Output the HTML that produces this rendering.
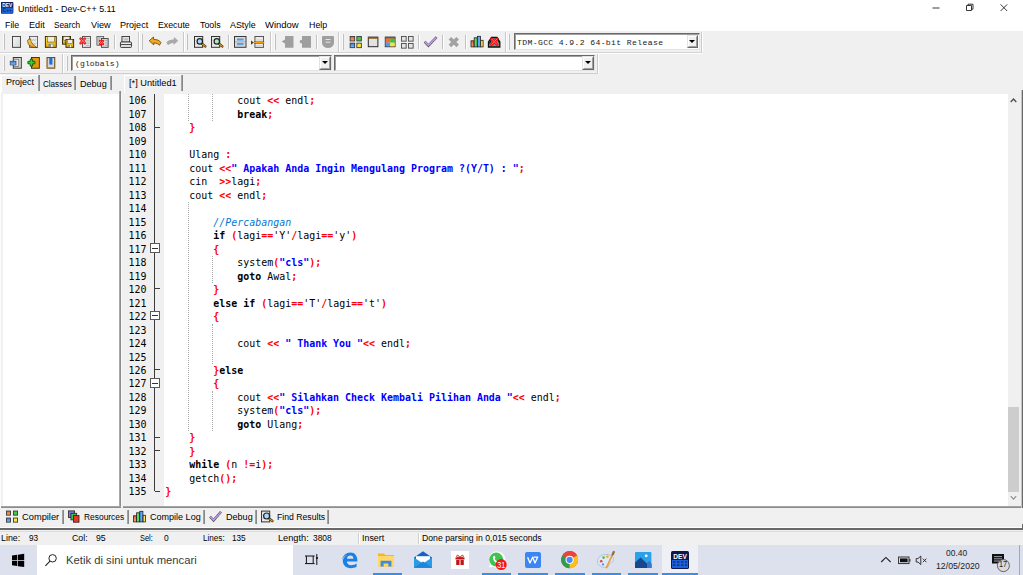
<!DOCTYPE html>
<html lang="id">
<head>
<meta charset="utf-8">
<title>Untitled1 - Dev-C++ 5.11</title>
<style>
html,body{margin:0;padding:0}
body{width:1023px;height:575px;overflow:hidden;position:relative;background:#f0f0f0;font-family:'Liberation Sans',sans-serif}
div,span,i,svg{position:absolute;box-sizing:border-box}
.tx{white-space:pre;display:block}
#top{left:0;top:0;width:1023px;height:31px;background:#fff}
/* toolbar grips & separators */
.grip{width:2px;border-left:1px solid #f8f8f8;border-right:1px solid #c0c0c0}
.bend{width:2px;border-left:1px solid #cacaca;border-right:1px solid #fff}
.sep{width:2px;border-left:1px solid #c2c2c2;border-right:1px solid #fff}
.hl{height:1px;left:0;width:1023px}
/* combos */
.combo{background:#fff;border:1px solid #e3e3e3;border-top-color:#696969;border-left-color:#696969}
.combo:before{content:"";position:absolute;left:0;top:0;right:0;bottom:0;border-left:1px solid #a0a0a0;border-top:1px solid #a0a0a0}
.dd{background:#f0f0f0;border:1px solid #696969;border-top-color:#e3e3e3;border-left-color:#e3e3e3}
.dd:before{content:"";position:absolute;left:0;top:0;right:0;bottom:0;border:1px solid #a0a0a0;border-top-color:#fff;border-left-color:#fff}
.dd:after{content:"";position:absolute;left:50%;top:50%;margin:-1.5px 0 0 -3px;border:3px solid transparent;border-top:3.2px solid #000;border-bottom:0}
/* tabs */
.tab{background:#f0f0f0}
.vsep{width:2px;background:linear-gradient(90deg,#a2a2a2 0 50%,#888 50% 100%)}
.tab.act{border-left:1px solid #fff;border-top:1px solid #fff}
/* panels */
#leftpane{left:3px;top:94px;width:116px;height:412px;background:#fff}
#editor{left:123px;top:506px;width:900px;height:2px;background:linear-gradient(#a4a4a4 0 50%,#8c8c8c 50% 100%)}
#codebg{left:164px;top:94px;width:844px;height:412px;background:#fff}
#vscroll{left:1008px;top:94px;width:13px;height:412px;background:#f0f0f0}
#thumb{left:1008px;top:407px;width:11px;height:84.500px;background:#cdcdcd}
.ln{left:121px;width:25.4px;height:13.48px;text-align:right;font:9.95px/13.48px 'DejaVu Sans Mono', 'Liberation Mono', monospace;letter-spacing:0.0080px;color:#000}
.ln .no{position:static}
.cl{left:165.35px;height:13.48px;white-space:pre;font:9.95px/13.48px 'DejaVu Sans Mono', 'Liberation Mono', monospace;letter-spacing:0.0080px;color:#000}
.cl span{position:static}
.s{color:#f00;font-weight:bold}
.k{font-weight:bold}
.q{color:#00f;font-weight:bold}
.c{color:#0078d7;font-style:italic}
.gd{width:0;border-left:1px dotted #aaa}
.fv{width:1px;background:#3c3c3c}
.fh{width:5px;height:1px;background:#3c3c3c}
.fb{width:10px;height:9.5px;background:#fff;border:1px solid #5a5a5a}
.fb i{left:1.2px;right:1.2px;top:3.4px;height:1px;background:#333}
/* bottom */
#btabs{left:0;top:507.4px;width:1023px;height:21px}
.bsep{width:2px;background:linear-gradient(90deg,#a2a2a2 0 50%,#888 50% 100%);top:510px;height:14px}
#status{left:0;top:530px;width:1023px;height:15px;background:#f0f0f0}
.ssep{width:2px;border-left:1px solid #d0d0d0;border-right:1px solid #fff;top:533px;height:11px}
/* taskbar */
#taskbar{left:0;top:544.7px;width:1023px;height:30.3px;background:#dde1ee}
#search{left:36.9px;top:0;width:256.3px;height:30.3px;background:#fff}
.ul{height:1.6px;bottom:0;background:#3a8fe4}
#tbact{left:661.5px;top:0;width:36px;height:30.3px;background:#eef0f6}

#lpr{left:119px;top:91px;width:2px;height:417px;background:linear-gradient(90deg,#a8a8a8 0 50%,#8c8c8c 50% 100%)}
#lpb{left:1px;top:506px;width:120px;height:2px;background:linear-gradient(#a4a4a4 0 50%,#8c8c8c 50% 100%)}
#edr{left:1021px;top:90px;width:2px;height:418px;background:linear-gradient(90deg,#c4c4c4 0 50%,#6a6a6a 50% 100%)}
#lphl{left:121px;top:94px;width:1px;height:412px;background:#f8f8f8}
#lpl{left:0;top:74px;width:1px;height:434px;background:#fcfcfc}

</style>
</head>
<body>
<div id="top"></div>
<!-- title icon -->
<svg style="left:1px;top:2px" width="12" height="12" viewBox="0 0 12 12"><rect x="0" y="0" width="12" height="11.5" fill="#1c3f94"/><rect x="0" y="0" width="12" height="6" fill="#16245c"/><rect x="1.5" y="1.8" width="9" height="3" fill="#dfe6f5"/><rect x="1" y="7" width="10" height="3.6" fill="#2a7de1"/></svg>
<!-- window controls -->
<svg style="left:930px;top:0" width="93" height="17" viewBox="0 0 93 17"><g stroke="#222" stroke-width="0.9" fill="none"><path d="M2.5 8h7"/><path d="M36.5 5.5h5v5h-5zM38 5.5v-1.3h5v5h-1.5"/><path d="M70.6 4.4l6.6 6.6M77.2 4.4l-6.6 6.6"/></g></svg>

<!-- toolbar row 1 -->
<div class="hl" style="top:52.4px;background:#d4d4d4;width:702px"></div>
<div class="hl" style="top:53.4px;background:#fff;width:702px"></div>
<div class="grip" style="left:2.6px;top:34px;height:16px"></div>
<div class="sep" style="left:113.5px;top:35px;height:14px"></div>
<div class="bend" style="left:137.5px;top:32px;height:20px"></div>
<div class="grip" style="left:140.8px;top:34px;height:16px"></div>
<div class="bend" style="left:182.8px;top:32px;height:20px"></div>
<div class="grip" style="left:186px;top:34px;height:16px"></div>
<div class="sep" style="left:227.8px;top:35px;height:14px"></div>
<div class="bend" style="left:270px;top:32px;height:20px"></div>
<div class="grip" style="left:273.5px;top:34px;height:16px"></div>
<div class="sep" style="left:315.8px;top:35px;height:14px"></div>
<div class="bend" style="left:338.3px;top:32px;height:20px"></div>
<div class="grip" style="left:341.8px;top:34px;height:16px"></div>
<div class="sep" style="left:418.2px;top:35px;height:14px"></div>
<div class="sep" style="left:441.8px;top:35px;height:14px"></div>
<div class="sep" style="left:465.2px;top:35px;height:14px"></div>
<div class="bend" style="left:504.8px;top:32px;height:20px"></div>
<div class="grip" style="left:508px;top:34px;height:16px"></div>
<div class="bend" style="left:700.5px;top:32px;height:20px"></div>
<div class="combo" style="left:513.6px;top:33.4px;width:186px;height:16.4px"></div>
<div class="dd" style="left:686.6px;top:35px;width:11.6px;height:13.4px"></div>

<!-- toolbar row 2 -->
<div class="hl" style="top:73px;background:#cfcfcf;width:598px"></div>
<div class="grip" style="left:2.6px;top:56px;height:15px"></div>
<div class="bend" style="left:62px;top:54px;height:19px"></div>
<div class="grip" style="left:65.5px;top:56px;height:15px"></div>
<div class="bend" style="left:596.6px;top:54px;height:19px"></div>
<div class="combo" style="left:70.6px;top:54.6px;width:261.4px;height:16.4px"></div>
<div class="dd" style="left:319.2px;top:56.2px;width:11.6px;height:13.4px"></div>
<div class="combo" style="left:333.6px;top:54.6px;width:261.4px;height:16.4px"></div>
<div class="dd" style="left:582px;top:56.2px;width:11.6px;height:13.4px"></div>

<svg id="ic" style="left:0;top:0" width="1023" height="575" viewBox="0 0 1023 575"><defs><linearGradient id="gpg" x1="0" y1="0" x2="1" y2="1"><stop offset="0" stop-color="#f6f6f6"/><stop offset="1" stop-color="#d4d4d4"/></linearGradient><linearGradient id="gor" x1="0" y1="0" x2="0" y2="1"><stop offset="0" stop-color="#ffd35a"/><stop offset="1" stop-color="#f29a10"/></linearGradient><linearGradient id="gye" x1="0" y1="0" x2="0" y2="1"><stop offset="0" stop-color="#ffe24a"/><stop offset="1" stop-color="#e0a800"/></linearGradient><linearGradient id="gbl" x1="0" y1="0" x2="0" y2="1"><stop offset="0" stop-color="#2f7fe0"/><stop offset="1" stop-color="#7cc0ff"/></linearGradient><linearGradient id="gre" x1="0" y1="0" x2="0" y2="1"><stop offset="0" stop-color="#f0602a"/><stop offset="1" stop-color="#ffa070"/></linearGradient></defs><rect x="12.45" y="36.45" width="8.10" height="10.90" fill="url(#gpg)" stroke="#3a3a3a" stroke-width="0.90"/><rect x="29.40" y="36.40" width="8.20" height="11.00" fill="#ececec" stroke="#4a4a4a" stroke-width="0.80"/><path d="M31.5 38.6l1.2 2.4l1-2l1 2l1.200-2.400M33 43l.8 1.600l.8-1.400l.8 1.400l.8-1.600" fill="none" stroke="#aaa" stroke-width="0.500"/><path d="M27.7 40C27.2 44.6 31 48.4 37 47.500C33.600 45.900 31 42.800 30.300 38.700z" fill="url(#gor)" stroke="#3a2a00" stroke-width="0.600"/><rect x="45.35" y="36.45" width="10.90" height="10.90" fill="url(#gye)" stroke="#2e2200" stroke-width="0.90"/><rect x="47.26" y="36.70" width="7.08" height="5.31" fill="#ececec" stroke="#5a4a10" stroke-width="0.5"/><rect x="48.44" y="44.02" width="4.96" height="3.19" fill="#8a8a8a"/><rect x="51.04" y="44.50" width="1.65" height="2.36" fill="#fff"/><rect x="62.45" y="36.45" width="8.10" height="7.70" fill="url(#gye)" stroke="#2e2200" stroke-width="0.90"/><rect x="63.80" y="36.70" width="5.40" height="3.87" fill="#ececec" stroke="#5a4a10" stroke-width="0.5"/><rect x="64.70" y="41.85" width="3.78" height="2.32" fill="#8a8a8a"/><rect x="66.68" y="42.19" width="1.26" height="1.72" fill="#fff"/><rect x="65.95" y="39.45" width="7.70" height="7.90" fill="url(#gye)" stroke="#2e2200" stroke-width="0.90"/><rect x="67.22" y="39.70" width="5.16" height="3.96" fill="#ececec" stroke="#5a4a10" stroke-width="0.5"/><rect x="68.08" y="44.98" width="3.61" height="2.38" fill="#8a8a8a"/><rect x="69.97" y="45.34" width="1.20" height="1.76" fill="#fff"/><rect x="82.45" y="36.45" width="8.10" height="10.90" fill="#e4e4e4" stroke="#4a4a4a" stroke-width="0.90"/><path d="M86 38.500h3.600M86 40.800h3.600M86 43.100h3.600M86 45.400h3.600" stroke="#999" stroke-width="0.600"/><path d="M80.65 38.65L84.75 43.15M84.75 38.65L80.65 43.15" stroke="#ee1c1c" stroke-width="2.70" stroke-linecap="round" fill="none"/><path d="M80.95 38.95L84.45 42.85M84.45 38.95L80.95 42.85" stroke="#ff8a8a" stroke-width="0.81" stroke-linecap="round" fill="none"/><rect x="96.90" y="36.40" width="6.80" height="8.80" fill="#d8d8d8" stroke="#555" stroke-width="0.80"/><path d="M97.500 38h3M97.500 40h2M97.500 42h1.500" stroke="#888" stroke-width="0.600"/><rect x="101.45" y="38.45" width="6.70" height="8.90" fill="#d6d6d6" stroke="#444" stroke-width="0.90"/><path d="M105 40.500h2.600M105 43h2.600M105 45.400h2.600" stroke="#999" stroke-width="0.600"/><path d="M99.90 40.90L103.10 44.10M103.10 40.90L99.90 44.10" stroke="#ee1c1c" stroke-width="2.20" stroke-linecap="round" fill="none"/><path d="M100.20 41.20L102.80 43.80M102.80 41.20L100.20 43.80" stroke="#ff8a8a" stroke-width="0.66" stroke-linecap="round" fill="none"/><rect x="121.95" y="36.45" width="7.60" height="5.70" fill="#e4e4e4" stroke="#333" stroke-width="0.90"/><path d="M123.600 38l1.200 2.400l1-2l1 2l1.200-2.400" fill="none" stroke="#999" stroke-width="0.600"/><rect x="120.45" y="42" width="11" height="5.4" rx="0.8" fill="#f2f2f2" stroke="#222" stroke-width="0.9"/><path d="M121 44.6h10" stroke="#222" stroke-width="0.9"/><path d="M149.200 40.800L153.400 37L153.700 39.400C156.600 39.300 159.800 40.400 161 42.600L159.400 45.300C158.200 43.800 156.400 43 153.900 42.900L153.800 44.900z" fill="#f5a81c" stroke="#4a2e00" stroke-width="0.700" stroke-linejoin="round"/><path d="M178.200 40.800L174 37L173.700 39.400C170.800 39.300 167.600 40.400 166.400 42.600L168 45.300C169.200 43.800 171 43 173.500 42.900L173.600 44.900z" fill="#a9a9a9"/><rect x="194.50" y="36.50" width="8.20" height="10.80" fill="#e9e9e9" stroke="#333" stroke-width="1.00"/><path d="M201.96 43.56L205.30 46.40" stroke="#3a2a00" stroke-width="2.4" stroke-linecap="round"/><path d="M202.37 43.96L205.30 46.40" stroke="#f0a020" stroke-width="1.1" stroke-linecap="round"/><circle cx="199.80" cy="41.40" r="2.70" fill="#a9d8fa" stroke="#222" stroke-width="1.200"/><path d="M194.90 40.40h1.600M194.90 43.90h1.600" stroke="#999" stroke-width="0.500"/><rect x="211.50" y="36.50" width="8.20" height="10.80" fill="#e9e9e9" stroke="#333" stroke-width="1.00"/><path d="M218.96 43.56L222.30 46.40" stroke="#3a2a00" stroke-width="2.4" stroke-linecap="round"/><path d="M219.37 43.96L222.30 46.40" stroke="#f0a020" stroke-width="1.1" stroke-linecap="round"/><circle cx="216.80" cy="41.40" r="2.70" fill="#a6ecc4" stroke="#222" stroke-width="1.200"/><path d="M211.90 40.40h1.600M211.90 43.90h1.600" stroke="#999" stroke-width="0.500"/><rect x="234.50" y="36.50" width="11.50" height="10.80" fill="#dadada" stroke="#3a3a3a" stroke-width="1.00"/><rect x="237" y="38.600" width="6.600" height="2.200" fill="url(#gbl)"/><rect x="237" y="43.200" width="6.600" height="2.200" fill="url(#gbl)"/><path d="M235 41.9h10.5" stroke="#888" stroke-width="0.6"/><rect x="254.95" y="36.45" width="8.60" height="10.90" fill="#ececec" stroke="#444" stroke-width="0.90"/><path d="M255 40h8.5M255 45.4h8.5" stroke="#bbb" stroke-width="0.6"/><rect x="254.6" y="41.8" width="9.3" height="1.9" fill="#f5a000" stroke="#4a3a20" stroke-width="0.4"/><path d="M251 40.4l2.8 2.2l-2.8 2.2z" fill="#5a3a00"/><path d="M285 36h8.5v11.8h-8.5v-4.2l-3.4-2l3.4-2z" fill="#9f9f9f"/><path d="M302 36h9v11.8h-9v-4.5a1.8 1.8 0 1 1 0-3.4z" fill="#9f9f9f"/><path d="M322 37a1 1 0 0 1 1-1h10a1 1 0 0 1 1 1v5.5a6 5.6 0 0 1-12 0z" fill="#9f9f9f"/><path d="M325.6 39.5h4.9M325.6 42.2h4.9" stroke="#e6e6e6" stroke-width="1"/><rect x="350.15" y="36.45" width="4.50" height="4.50" fill="url(#gre)" stroke="#3a3a3a" stroke-width="0.9"/><rect x="356.85" y="36.45" width="4.50" height="4.50" fill="#45c845" stroke="#3a3a3a" stroke-width="0.9"/><rect x="350.15" y="43.15" width="4.50" height="4.50" fill="url(#gbl)" stroke="#3a3a3a" stroke-width="0.9"/><rect x="356.85" y="43.15" width="4.50" height="4.50" fill="#f8e840" stroke="#3a3a3a" stroke-width="0.9"/><rect x="368.30" y="37.10" width="9.60" height="9.60" fill="#e2e2e2" stroke="#2a2a2a" stroke-width="1.00"/><rect x="368.3" y="37" width="9.6" height="1.7" fill="#8a5200"/><rect x="385.30" y="37.10" width="9.70" height="9.60" fill="#e2e2e2" stroke="#2a2a2a" stroke-width="1.00"/><rect x="385.3" y="37" width="9.7" height="1.7" fill="#8a5200"/><rect x="385.6" y="38.8" width="4.6" height="3.9" fill="#f56a3a"/><rect x="390.2" y="38.8" width="4.6" height="3.9" fill="#3cc03c"/><rect x="385.6" y="42.7" width="4.6" height="3.7" fill="#4a9cf0"/><rect x="390.2" y="42.7" width="4.6" height="3.7" fill="#f6e43c"/><rect x="401.45" y="36.45" width="4.70" height="4.70" fill="#e4e4e4" stroke="#4a4a4a" stroke-width="0.9"/><rect x="408.45" y="36.45" width="4.70" height="4.70" fill="#e4e4e4" stroke="#4a4a4a" stroke-width="0.9"/><rect x="401.45" y="43.45" width="4.70" height="4.70" fill="#e4e4e4" stroke="#4a4a4a" stroke-width="0.9"/><rect x="408.45" y="43.45" width="4.70" height="4.70" fill="#e4e4e4" stroke="#4a4a4a" stroke-width="0.9"/><path d="M424.60 41.60L428.40 45.60L436.60 37.20" stroke="#5a5a5a" stroke-width="2.500" fill="none" stroke-linejoin="miter"/><path d="M424.90 41.80L428.40 45.30L436.40 37.50" stroke="#c29cf8" stroke-width="1.400" fill="none" stroke-linejoin="miter"/><path d="M449.900 38.300L457.700 45.900M457.700 38.300L449.900 45.900" stroke="#a2a2a2" stroke-width="3.600" fill="none"/><rect x="471.00" y="40.80" width="3.00" height="6.10" fill="url(#gre)" stroke="#222" stroke-width="0.8"/><rect x="474.20" y="37.80" width="3.00" height="9.10" fill="#5fd85f" stroke="#222" stroke-width="0.8"/><rect x="477.40" y="36.30" width="3.10" height="10.60" fill="#5aa8ff" stroke="#222" stroke-width="0.8"/><rect x="480.70" y="40.30" width="2.40" height="6.60" fill="#ffe84a" stroke="#222" stroke-width="0.8"/><path d="M488.5 47V42l3-4.5h5.5l2.8 4.5v5z" fill="#8a8a8a" stroke="#111" stroke-width="1.300"/><path d="M489.500 43.500l2-4M497.600 38.200l1.800 4.500" stroke="#111" stroke-width="1.200"/><path d="M491.55 38.95L497.05 44.45M497.05 38.95L491.55 44.45" stroke="#f01010" stroke-width="2.70" stroke-linecap="round" fill="none"/><path d="M491.85 39.25L496.75 44.15M496.75 39.25L491.85 44.15" stroke="#ff8a8a" stroke-width="0.81" stroke-linecap="round" fill="none"/><rect x="13.30" y="57.50" width="8.00" height="10.70" fill="#e4e4e4" stroke="#363636" stroke-width="1.00"/><path d="M13.6 59.2h5.2v7.4h-5.2" fill="none" stroke="#555" stroke-width="0.7"/><rect x="10.2" y="61.2" width="5.8" height="3.8" fill="url(#gbl)" stroke="#445" stroke-width="0.7"/><rect x="31.45" y="57.45" width="7.90" height="10.80" fill="#e8960c" stroke="#3a2800" stroke-width="0.90"/><path d="M30.200 59.200h2.400v2.200h2.300v2.400h-2.300v2.300h-2.400v-2.300h-2.300v-2.400h2.300z" fill="#38d038" stroke="#0a5a0a" stroke-width="0.900" stroke-linejoin="round"/><rect x="47.05" y="57.55" width="7.70" height="10.60" fill="#d8d8d8" stroke="#7a4a14" stroke-width="1.10"/><rect x="49.3" y="57.6" width="3.1" height="7" fill="#1274dc"/><path d="M47.2 67.6h7.4" stroke="#d08a30" stroke-width="0.9"/><rect x="6.45" y="511.05" width="4.10" height="4.10" fill="url(#gre)" stroke="#3a3a3a" stroke-width="0.9"/><rect x="13.45" y="511.05" width="4.10" height="4.10" fill="#45c845" stroke="#3a3a3a" stroke-width="0.9"/><rect x="6.45" y="518.05" width="4.10" height="4.10" fill="url(#gbl)" stroke="#3a3a3a" stroke-width="0.9"/><rect x="13.45" y="518.05" width="4.10" height="4.10" fill="#f8e840" stroke="#3a3a3a" stroke-width="0.9"/><rect x="68.4" y="510.9" width="6.2" height="6.6" fill="#7a7af2" stroke="#222" stroke-width="0.8"/><rect x="70.9" y="513.3" width="5.8" height="6.6" fill="#3cc83c" stroke="#222" stroke-width="0.8"/><rect x="73.4" y="515.6" width="5.6" height="6.6" fill="#e4382a" stroke="#222" stroke-width="0.8"/><rect x="133.40" y="515.80" width="3.00" height="6.10" fill="url(#gre)" stroke="#222" stroke-width="0.8"/><rect x="136.60" y="512.80" width="3.00" height="9.10" fill="#5fd85f" stroke="#222" stroke-width="0.8"/><rect x="139.80" y="511.30" width="3.10" height="10.60" fill="#5aa8ff" stroke="#222" stroke-width="0.8"/><rect x="143.10" y="515.30" width="2.40" height="6.60" fill="#ffe84a" stroke="#222" stroke-width="0.8"/><path d="M210.00 516.60L213.60 520.40L221.00 511.80" stroke="#5a5a5a" stroke-width="2.500" fill="none" stroke-linejoin="miter"/><path d="M210.30 516.80L213.60 520.10L220.80 512.10" stroke="#c29cf8" stroke-width="1.400" fill="none" stroke-linejoin="miter"/><rect x="261.50" y="511.10" width="8.20" height="10.80" fill="#e9e9e9" stroke="#333" stroke-width="1.00"/><path d="M269.00 518.40L272.40 521.00" stroke="#3a2a00" stroke-width="2.4" stroke-linecap="round"/><path d="M269.45 518.85L272.40 521.00" stroke="#f0a020" stroke-width="1.1" stroke-linecap="round"/><circle cx="266.60" cy="516.00" r="3.00" fill="#a9d8fa" stroke="#222" stroke-width="1.200"/><path d="M261.40 515.00h1.600M261.40 518.50h1.600" stroke="#999" stroke-width="0.500"/><rect x="1" y="2" width="12.4" height="11.6" rx="1" fill="#14225e"/><rect x="1.6" y="7.6" width="11.2" height="5.4" fill="#1f62d8"/><text x="2.2" y="6.9" font-family="Liberation Sans,sans-serif" font-weight="bold" font-size="4.6" fill="#fff" textLength="10" lengthAdjust="spacingAndGlyphs">DEV</text><text x="2.6" y="12.3" font-family="Liberation Sans,sans-serif" font-weight="bold" font-size="4.6" fill="#0c2a8a" textLength="9.4" lengthAdjust="spacingAndGlyphs">C++</text></svg>

<!-- left tabs -->
<div class="tab act" style="left:1px;top:75px;width:37px;height:18px"></div>
<div class="vsep" style="left:38px;top:75px;height:16px"></div>
<div class="vsep" style="left:74px;top:76px;height:14px"></div>
<div class="vsep" style="left:110px;top:76px;height:14px"></div>
<div id="leftpane"></div><div id="lpr"></div><div id="lpb"></div><div id="lphl"></div><div id="lpl"></div>
<!-- editor tab -->
<div class="tab act" style="left:124px;top:75px;width:57px;height:18px"></div>
<div class="vsep" style="left:181px;top:75px;height:16px"></div>

<div id="editor"></div><div id="edr"></div>
<div id="codebg"></div>
<div id="vscroll"></div>
<div id="thumb"></div>
<svg style="left:1008px;top:93px" width="13" height="413" viewBox="0 0 13 413"><path d="M2.700 8.900l2.800-2.900 2.800 2.900" stroke="#505050" stroke-width="1.400" fill="none"/><path d="M2.800 403.200l2.700 3 2.700-3" stroke="#8c8c8c" stroke-width="1.100" fill="none"/></svg>
<div class="gd" style="left:188.21px;top:94.40px;height:26.96px"></div>
<div class="gd" style="left:212.18px;top:94.40px;height:26.96px"></div>
<div class="gd" style="left:188.21px;top:202.24px;height:229.16px"></div>
<div class="gd" style="left:212.18px;top:256.16px;height:26.96px"></div>
<div class="gd" style="left:212.18px;top:323.56px;height:40.44px"></div>
<div class="gd" style="left:212.18px;top:390.96px;height:40.44px"></div>
<div class="fv" style="left:154.00px;top:94px;height:397.06px"></div>
<div class="fh" style="left:154.50px;top:126.60px"></div>
<div class="fh" style="left:154.50px;top:288.36px"></div>
<div class="fh" style="left:154.50px;top:369.24px"></div>
<div class="fh" style="left:154.50px;top:436.64px"></div>
<div class="fh" style="left:154.50px;top:450.12px"></div>
<div class="fh" style="left:154.50px;top:490.56px"></div>
<div class="fb" style="left:150.00px;top:243.32px"><i></i></div>
<div class="fb" style="left:150.00px;top:310.72px"><i></i></div>
<div class="fb" style="left:150.00px;top:378.12px"><i></i></div>
<div class="ln" style="top:94.40px"><span class="no">106</span></div>
<div class="cl" style="top:94.40px">            <span class="i">cout </span><span class="s">&lt;&lt;</span> <span class="i">endl</span><span class="s">;</span></div>
<div class="ln" style="top:107.88px"><span class="no">107</span></div>
<div class="cl" style="top:107.88px">            <span class="k">break</span><span class="s">;</span></div>
<div class="ln" style="top:121.36px"><span class="no">108</span></div>
<div class="cl" style="top:121.36px">    <span class="s">}</span></div>
<div class="ln" style="top:134.84px"><span class="no">109</span></div>
<div class="ln" style="top:148.32px"><span class="no">110</span></div>
<div class="cl" style="top:148.32px">    <span class="i">Ulang </span><span class="s">:</span></div>
<div class="ln" style="top:161.80px"><span class="no">111</span></div>
<div class="cl" style="top:161.80px">    <span class="i">cout </span><span class="s">&lt;&lt;</span><span class="q">" Apakah Anda Ingin Mengulang Program ?(Y/T) : "</span><span class="s">;</span></div>
<div class="ln" style="top:175.28px"><span class="no">112</span></div>
<div class="cl" style="top:175.28px">    <span class="i">cin  </span><span class="s">&gt;&gt;</span><span class="i">lagi</span><span class="s">;</span></div>
<div class="ln" style="top:188.76px"><span class="no">113</span></div>
<div class="cl" style="top:188.76px">    <span class="i">cout </span><span class="s">&lt;&lt;</span> <span class="i">endl</span><span class="s">;</span></div>
<div class="ln" style="top:202.24px"><span class="no">114</span></div>
<div class="ln" style="top:215.72px"><span class="no">115</span></div>
<div class="cl" style="top:215.72px">        <span class="c">//Percabangan</span></div>
<div class="ln" style="top:229.20px"><span class="no">116</span></div>
<div class="cl" style="top:229.20px">        <span class="k">if</span> <span class="s">(</span><span class="i">lagi</span><span class="s">==</span><span class="i">'Y'</span><span class="s">/</span><span class="i">lagi</span><span class="s">==</span><span class="i">'y'</span><span class="s">)</span></div>
<div class="ln" style="top:242.68px"><span class="no">117</span></div>
<div class="cl" style="top:242.68px">        <span class="s">{</span></div>
<div class="ln" style="top:256.16px"><span class="no">118</span></div>
<div class="cl" style="top:256.16px">            <span class="i">system</span><span class="s">(</span><span class="q">"cls"</span><span class="s">);</span></div>
<div class="ln" style="top:269.64px"><span class="no">119</span></div>
<div class="cl" style="top:269.64px">            <span class="k">goto</span> <span class="i">Awal</span><span class="s">;</span></div>
<div class="ln" style="top:283.12px"><span class="no">120</span></div>
<div class="cl" style="top:283.12px">        <span class="s">}</span></div>
<div class="ln" style="top:296.60px"><span class="no">121</span></div>
<div class="cl" style="top:296.60px">        <span class="k">else if</span> <span class="s">(</span><span class="i">lagi</span><span class="s">==</span><span class="i">'T'</span><span class="s">/</span><span class="i">lagi</span><span class="s">==</span><span class="i">'t'</span><span class="s">)</span></div>
<div class="ln" style="top:310.08px"><span class="no">122</span></div>
<div class="cl" style="top:310.08px">        <span class="s">{</span></div>
<div class="ln" style="top:323.56px"><span class="no">123</span></div>
<div class="ln" style="top:337.04px"><span class="no">124</span></div>
<div class="cl" style="top:337.04px">            <span class="i">cout </span><span class="s">&lt;&lt;</span> <span class="q">" Thank You "</span><span class="s">&lt;&lt;</span> <span class="i">endl</span><span class="s">;</span></div>
<div class="ln" style="top:350.52px"><span class="no">125</span></div>
<div class="ln" style="top:364.00px"><span class="no">126</span></div>
<div class="cl" style="top:364.00px">        <span class="s">}</span><span class="k">else</span></div>
<div class="ln" style="top:377.48px"><span class="no">127</span></div>
<div class="cl" style="top:377.48px">        <span class="s">{</span></div>
<div class="ln" style="top:390.96px"><span class="no">128</span></div>
<div class="cl" style="top:390.96px">            <span class="i">cout </span><span class="s">&lt;&lt;</span><span class="q">" Silahkan Check Kembali Pilihan Anda "</span><span class="s">&lt;&lt;</span> <span class="i">endl</span><span class="s">;</span></div>
<div class="ln" style="top:404.44px"><span class="no">129</span></div>
<div class="cl" style="top:404.44px">            <span class="i">system</span><span class="s">(</span><span class="q">"cls"</span><span class="s">);</span></div>
<div class="ln" style="top:417.92px"><span class="no">130</span></div>
<div class="cl" style="top:417.92px">            <span class="k">goto</span> <span class="i">Ulang</span><span class="s">;</span></div>
<div class="ln" style="top:431.40px"><span class="no">131</span></div>
<div class="cl" style="top:431.40px">    <span class="s">}</span></div>
<div class="ln" style="top:444.88px"><span class="no">132</span></div>
<div class="cl" style="top:444.88px">    <span class="s">}</span></div>
<div class="ln" style="top:458.36px"><span class="no">133</span></div>
<div class="cl" style="top:458.36px">    <span class="k">while</span> <span class="s">(</span><span class="i">n </span><span class="s">!=</span><span class="i">i</span><span class="s">);</span></div>
<div class="ln" style="top:471.84px"><span class="no">134</span></div>
<div class="cl" style="top:471.84px">    <span class="i">getch</span><span class="s">();</span></div>
<div class="ln" style="top:485.32px"><span class="no">135</span></div>
<div class="cl" style="top:485.32px"><span class="s">}</span></div>

<!-- bottom tabs -->
<div id="btabs"></div>
<div class="bsep" style="left:62px"></div>
<div class="bsep" style="left:127px"></div>
<div class="bsep" style="left:203px"></div>
<div class="bsep" style="left:255px"></div>
<div class="bsep" style="left:327px"></div>
<div class="hl" style="top:526.8px;height:1.5px;background:#fff;width:1022px"></div>
<div class="hl" style="top:528.3px;height:1.6px;background:#696969"></div>
<div style="left:1021.6px;top:524px;width:1.4px;height:6px;background:#696969"></div>
<div class="hl" style="top:531px;height:1px;background:#dcdcdc"></div>
<div class="ssep" style="left:358px"></div>
<div class="ssep" style="left:418px"></div>

<!-- taskbar -->
<div id="taskbar">
  <div id="search"></div>
  <div id="tbact"></div>
  <div class="ul" style="left:372.5px;width:29px"></div>
  <div class="ul" style="left:481.5px;width:29.5px"></div>
  <div class="ul" style="left:518px;width:29.5px"></div>
  <div class="ul" style="left:555px;width:29.5px"></div>
  <div class="ul" style="left:591.5px;width:29.5px"></div>
  <div class="ul" style="left:628px;width:29.5px"></div>
  <div class="ul" style="left:661.5px;width:36px"></div>
  <div style="left:1019.4px;top:0;width:1px;height:30.3px;background:#a4a8b4"></div>
</div>
<svg id="tbi" style="left:0;top:0" width="1023" height="575" viewBox="0 0 1023 575"><path d="M12 555.6l5.2-.8v5.3H12zM17.9 554.7l6.3-.9v6.3h-6.3zM12 560.8h5.2v5.3l-5.2-.8zM17.9 560.8h6.3v6.3l-6.3-.9z" fill="#000"/><circle cx="52.6" cy="558.3" r="3.7" fill="none" stroke="#222" stroke-width="1"/><path d="M50 561.2L45.4 565.8" stroke="#222" stroke-width="1.1"/><path d="M305 556h9.6M305 563.6h9.6M306.4 556v7.6M313.2 556v7.6M316.8 554v11" stroke="#111" stroke-width="1" fill="none"/><circle cx="317" cy="558" r="1.1" fill="#111"/><path d="M342.200 560.600C342.600 555.400 346.400 552.600 350.400 552.600C355 552.600 357.600 556 357.400 561.400H346.800C347 563.800 348.800 565.200 351.200 565.200C353.200 565.200 355 564.600 356.600 563.600V566.800C354.800 567.800 352.800 568.200 350.600 568.200C346 568.200 342.800 565.200 342.800 560.600C343.400 557.800 345.200 556 347.200 554.800C344.800 555.600 343 557.600 342.200 560.600zM346.900 558.800H353.400C353.400 556.800 352.200 555.600 350.400 555.600C348.600 555.600 347.200 556.800 346.900 558.800z" fill="#1b7fe3" fill-rule="evenodd"/><path d="M378 553.6h6l1.2 1.4h8.8v11.4h-16z" fill="#f5b52a"/><rect x="378" y="556" width="16" height="10.4" fill="#ffd866"/><path d="M380.6 566.4v-5.6h10.8v5.6h-3v-3h-4.8v3z" fill="#3c8be0"/><path d="M414 557.5l9-6.3l9 6.3v10.3h-18z" fill="#1565c0"/><path d="M416 556.2h14v7h-14z" fill="#fff"/><path d="M414 557.6l9 6l9-6v10.2h-18z" fill="#2a9be8"/><path d="M414 567.8l9-6.4l9 6.4z" fill="#1f86d8"/><rect x="451" y="551" width="18" height="18" fill="#fff"/><path d="M455.5 557.6h9v1.8h-9zM456.2 560h3.3v5h-3.3zM460.5 560h3.3v5h-3.3z" fill="#c41414"/><path d="M460 557.4c-2-3.4-4.4-2-3 0zM460 557.4c2-3.4 4.4-2 3 0z" fill="none" stroke="#c41414" stroke-width="0.9"/><path d="M489 567.6l1.2-3.6a8.2 8.2 0 1 1 2.8 2.7z" fill="#fff"/><circle cx="496.2" cy="559.6" r="7" fill="#3fc351"/><path d="M493.2 556.4c.6-1 1.4-.8 1.6-.2l.6 1.400c.2.500-.700.900-.600 1.300c.5 1.200 1.400 2 2.600 2.600c.4.100.800-.800 1.300-.600l1.400.700c.6.300.700 1-.300 1.700c-2.800 1.600-8.200-3.600-6.600-6.900z" fill="#fff"/><circle cx="501.2" cy="564.6" r="5.5" fill="#f01818"/><text x="497.2" y="567.600" font-family="Liberation Sans,sans-serif" font-size="8.4" fill="#fff" textLength="8" lengthAdjust="spacingAndGlyphs">31</text><rect x="525" y="552" width="16" height="16" rx="2" fill="#3b86f2"/><path d="M527.600 557.200l2.400 5.800l2.600-5.800l2.400 5.800l2.600-5.800h-4" fill="none" stroke="#fff" stroke-width="1.300" stroke-linejoin="round"/><circle cx="569.6" cy="559.8" r="8.5" fill="#e8453c"/><path d="M569.60 559.80L562.24 555.55A8.5 8.5 0 0 0 569.60 568.30z" fill="#2f9e4b"/><path d="M569.60 559.80L569.60 568.30A8.5 8.5 0 0 0 576.96 555.55z" fill="#fbc116"/><path d="M569.60 555.80h7.8A8.5 8.5 0 0 0 562.24 555.55z" fill="#e8453c"/><circle cx="569.6" cy="559.8" r="4.1" fill="#fff"/><circle cx="569.6" cy="559.8" r="3.1" fill="#4a8af4"/><path d="M597.6 562c-.6-4.600 4.400-8 9.400-7.600c4.600.4 7 3.200 6.200 6.200c-.6 2.400-2.800 2-3.800 3.200c-1 1.200.2 2.600-1.600 3.200c-4 1.200-9.600-.600-10.200-5z" fill="#dfe9f6" stroke="#9fb6d4" stroke-width="0.7"/><circle cx="601.2" cy="561.200" r="1.300" fill="#e24a3a"/><circle cx="603.600" cy="557.600" r="1.300" fill="#4ac04a"/><circle cx="607.400" cy="556.600" r="1.300" fill="#f2b020"/><circle cx="603" cy="564.400" r="1.100" fill="#5a8ae0"/><path d="M613.600 552.400L606.400 567.600" stroke="#e8a040" stroke-width="1.700" stroke-linecap="round"/><path d="M613.800 552l-1.200 2.600" stroke="#9a6a3a" stroke-width="2.200" stroke-linecap="round"/><rect x="635" y="552" width="16.400" height="16" rx="1" fill="#2aa2ea"/><path d="M635 568v-5.600l5.600-5l6.400 6.200l2.200-2l2.200 2.200v4.200z" fill="#17478f"/><path d="M647 563.600l2.200-2l2.200 2.200v4.200h-4.400z" fill="#3f74d0"/><circle cx="646.200" cy="555.800" r="1.400" fill="#fff"/><rect x="671" y="551" width="18" height="18" rx="1.600" fill="#0b1a4e"/><rect x="672" y="560" width="16" height="8" fill="#1c5fdc"/><path d="M673 562h14M673 565h14" stroke="#0b1a4e" stroke-width="1" stroke-dasharray="2.500 1.500"/><text x="673.200" y="558.800" font-family="Liberation Sans,sans-serif" font-weight="bold" font-size="7.200" fill="#fff" textLength="13.600" lengthAdjust="spacingAndGlyphs">DEV</text><path d="M881.200 562l4.700-4.600l4.700 4.600" fill="none" stroke="#222" stroke-width="1.100"/><rect x="898.600" y="557" width="10.400" height="6.600" fill="none" stroke="#222" stroke-width="0.900"/><rect x="900" y="558.400" width="7.600" height="3.800" fill="#111"/><rect x="909.400" y="559" width="1" height="2.600" fill="#222"/><path d="M916.200 558.600h1.800l2.800-2.600v8.600l-2.800-2.600h-1.800z" fill="none" stroke="#222" stroke-width="0.900" stroke-linejoin="round"/><path d="M922.800 558.600l3.600 3.600M926.400 558.600l-3.600 3.600" stroke="#222" stroke-width="0.900"/><path d="M992 554h12v9.600h-2.400v2.400l-2.600-2.400H992z" fill="#111"/><path d="M994 556.600h8M994 558.800h8M994 561h8" stroke="#dce0ee" stroke-width="0.700"/><circle cx="1003.400" cy="565.600" r="6" fill="#dcdcdc" stroke="#555" stroke-width="0.900"/></svg>
<span id="t0" class="tx" style="left:17.55px;top:5.11px;font:normal 9.20px/1 'Liberation Sans', 'DejaVu Sans', sans-serif;color:#000;transform:scaleX(0.9688);transform-origin:0 0;">Untitled1 - Dev-C++ 5.11</span>
<span id="t1" class="tx" style="left:5.15px;top:20.61px;font:normal 9.20px/1 'Liberation Sans', 'DejaVu Sans', sans-serif;color:#000;transform:scaleX(0.9586);transform-origin:0 0;">File</span>
<span id="t2" class="tx" style="left:28.65px;top:20.61px;font:normal 9.20px/1 'Liberation Sans', 'DejaVu Sans', sans-serif;color:#000;transform:scaleX(0.9909);transform-origin:0 0;">Edit</span>
<span id="t3" class="tx" style="left:54.15px;top:20.61px;font:normal 9.20px/1 'Liberation Sans', 'DejaVu Sans', sans-serif;color:#000;transform:scaleX(0.8996);transform-origin:0 0;">Search</span>
<span id="t4" class="tx" style="left:90.65px;top:20.61px;font:normal 9.20px/1 'Liberation Sans', 'DejaVu Sans', sans-serif;color:#000;transform:scaleX(0.9975);transform-origin:0 0;">View</span>
<span id="t5" class="tx" style="left:120.15px;top:20.61px;font:normal 9.20px/1 'Liberation Sans', 'DejaVu Sans', sans-serif;color:#000;transform:scaleX(0.9857);transform-origin:0 0;">Project</span>
<span id="t6" class="tx" style="left:158.15px;top:20.61px;font:normal 9.20px/1 'Liberation Sans', 'DejaVu Sans', sans-serif;color:#000;transform:scaleX(0.9547);transform-origin:0 0;">Execute</span>
<span id="t7" class="tx" style="left:199.65px;top:20.61px;font:normal 9.20px/1 'Liberation Sans', 'DejaVu Sans', sans-serif;color:#000;transform:scaleX(0.9649);transform-origin:0 0;">Tools</span>
<span id="t8" class="tx" style="left:230.15px;top:20.61px;font:normal 9.20px/1 'Liberation Sans', 'DejaVu Sans', sans-serif;color:#000;transform:scaleX(0.9675);transform-origin:0 0;">AStyle</span>
<span id="t9" class="tx" style="left:265.15px;top:20.61px;font:normal 9.20px/1 'Liberation Sans', 'DejaVu Sans', sans-serif;color:#000;transform:scaleX(1.0310);transform-origin:0 0;">Window</span>
<span id="t10" class="tx" style="left:309.15px;top:20.61px;font:normal 9.20px/1 'Liberation Sans', 'DejaVu Sans', sans-serif;color:#000;transform:scaleX(0.9626);transform-origin:0 0;">Help</span>
<span id="t11" class="tx" style="left:5.65px;top:78.11px;font:normal 9.20px/1 'Liberation Sans', 'DejaVu Sans', sans-serif;color:#000;transform:scaleX(0.9787);transform-origin:0 0;">Project</span>
<span id="t12" class="tx" style="left:42.65px;top:80.11px;font:normal 9.20px/1 'Liberation Sans', 'DejaVu Sans', sans-serif;color:#000;transform:scaleX(0.8780);transform-origin:0 0;">Classes</span>
<span id="t13" class="tx" style="left:79.65px;top:80.11px;font:normal 9.20px/1 'Liberation Sans', 'DejaVu Sans', sans-serif;color:#000;transform:scaleX(0.9860);transform-origin:0 0;">Debug</span>
<span id="t14" class="tx" style="left:128.65px;top:79.41px;font:normal 9.20px/1 'Liberation Sans', 'DejaVu Sans', sans-serif;color:#000;transform:scaleX(1.0042);transform-origin:0 0;">[*] Untitled1</span>
<span id="t15" class="tx" style="left:75.00px;top:59.99px;font:normal 8.10px/1 'Liberation Mono', 'DejaVu Sans Mono', monospace;color:#222;letter-spacing:0.098px;">(globals)</span>
<span id="t16" class="tx" style="left:517.00px;top:38.99px;font:normal 8.10px/1 'Liberation Mono', 'DejaVu Sans Mono', monospace;color:#222;letter-spacing:0.370px;">TDM-GCC 4.9.2 64-bit Release</span>
<span id="t17" class="tx" style="left:22.15px;top:512.71px;font:normal 9.20px/1 'Liberation Sans', 'DejaVu Sans', sans-serif;color:#000;transform:scaleX(1.0118);transform-origin:0 0;">Compiler</span>
<span id="t18" class="tx" style="left:84.15px;top:512.71px;font:normal 9.20px/1 'Liberation Sans', 'DejaVu Sans', sans-serif;color:#000;transform:scaleX(0.9153);transform-origin:0 0;">Resources</span>
<span id="t19" class="tx" style="left:149.65px;top:512.71px;font:normal 9.20px/1 'Liberation Sans', 'DejaVu Sans', sans-serif;color:#000;transform:scaleX(0.9827);transform-origin:0 0;">Compile Log</span>
<span id="t20" class="tx" style="left:225.65px;top:512.71px;font:normal 9.20px/1 'Liberation Sans', 'DejaVu Sans', sans-serif;color:#000;transform:scaleX(0.9860);transform-origin:0 0;">Debug</span>
<span id="t21" class="tx" style="left:277.15px;top:512.71px;font:normal 9.20px/1 'Liberation Sans', 'DejaVu Sans', sans-serif;color:#000;transform:scaleX(0.9439);transform-origin:0 0;">Find Results</span>
<span id="t22" class="tx" style="left:1.15px;top:534.11px;font:normal 9.20px/1 'Liberation Sans', 'DejaVu Sans', sans-serif;color:#000;transform:scaleX(0.9630);transform-origin:0 0;">Line:</span>
<span id="t23" class="tx" style="left:29.15px;top:534.11px;font:normal 9.20px/1 'Liberation Sans', 'DejaVu Sans', sans-serif;color:#000;transform:scaleX(0.8989);transform-origin:0 0;">93</span>
<span id="t24" class="tx" style="left:71.65px;top:534.11px;font:normal 9.20px/1 'Liberation Sans', 'DejaVu Sans', sans-serif;color:#000;transform:scaleX(0.9606);transform-origin:0 0;">Col:</span>
<span id="t25" class="tx" style="left:96.15px;top:534.11px;font:normal 9.20px/1 'Liberation Sans', 'DejaVu Sans', sans-serif;color:#000;transform:scaleX(0.9478);transform-origin:0 0;">95</span>
<span id="t26" class="tx" style="left:139.65px;top:534.11px;font:normal 9.20px/1 'Liberation Sans', 'DejaVu Sans', sans-serif;color:#000;transform:scaleX(0.8016);transform-origin:0 0;">Sel:</span>
<span id="t27" class="tx" style="left:164.15px;top:534.11px;font:normal 9.20px/1 'Liberation Sans', 'DejaVu Sans', sans-serif;color:#000;transform:scaleX(0.9171);transform-origin:0 0;">0</span>
<span id="t28" class="tx" style="left:202.65px;top:534.11px;font:normal 9.20px/1 'Liberation Sans', 'DejaVu Sans', sans-serif;color:#000;transform:scaleX(0.8846);transform-origin:0 0;">Lines:</span>
<span id="t29" class="tx" style="left:231.65px;top:534.11px;font:normal 9.20px/1 'Liberation Sans', 'DejaVu Sans', sans-serif;color:#000;transform:scaleX(0.8929);transform-origin:0 0;">135</span>
<span id="t30" class="tx" style="left:277.65px;top:534.11px;font:normal 9.20px/1 'Liberation Sans', 'DejaVu Sans', sans-serif;color:#000;transform:scaleX(1.0014);transform-origin:0 0;">Length:</span>
<span id="t31" class="tx" style="left:312.65px;top:534.11px;font:normal 9.20px/1 'Liberation Sans', 'DejaVu Sans', sans-serif;color:#000;transform:scaleX(0.9143);transform-origin:0 0;">3808</span>
<span id="t32" class="tx" style="left:362.15px;top:534.11px;font:normal 9.20px/1 'Liberation Sans', 'DejaVu Sans', sans-serif;color:#000;transform:scaleX(0.9659);transform-origin:0 0;">Insert</span>
<span id="t33" class="tx" style="left:422.15px;top:534.11px;font:normal 9.20px/1 'Liberation Sans', 'DejaVu Sans', sans-serif;color:#000;transform:scaleX(0.9450);transform-origin:0 0;">Done parsing in 0,015 seconds</span>
<span id="t34" class="tx" style="left:65.65px;top:554.83px;font:normal 11.30px/1 'Liberation Sans', 'DejaVu Sans', sans-serif;color:#3a3a3a;transform:scaleX(0.9959);transform-origin:0 0;">Ketik di sini untuk mencari</span>
<span id="t35" class="tx" style="left:946.15px;top:549.02px;font:normal 8.60px/1 'Liberation Sans', 'DejaVu Sans', sans-serif;color:#222;transform:scaleX(0.9853);transform-origin:0 0;">00.40</span>
<span id="t36" class="tx" style="left:935.65px;top:562.42px;font:normal 8.60px/1 'Liberation Sans', 'DejaVu Sans', sans-serif;color:#222;transform:scaleX(1.0159);transform-origin:0 0;">12/05/2020</span>
<span id="t37" class="tx" style="left:999.25px;top:561.36px;font:normal 8.20px/1 'Liberation Sans', 'DejaVu Sans', sans-serif;color:#222;transform:scaleX(0.8892);transform-origin:0 0;">17</span>

</body>
</html>
